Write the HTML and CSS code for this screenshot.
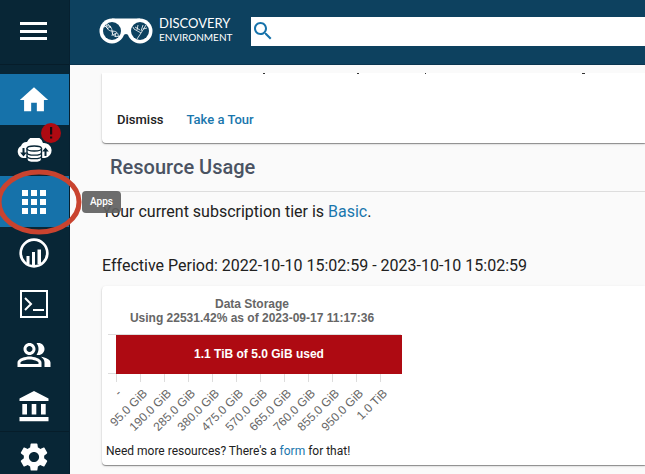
FILE: index.html
```html
<!DOCTYPE html>
<html lang="en">
<head>
<meta charset="utf-8">
<meta name="viewport" content="width=device-width, initial-scale=1">
<title>Discovery Environment</title>
<link rel="stylesheet" href="styles.css">
</head>
<body>
<div class="app">
  <nav class="sidebar" aria-label="Main">
    <button class="menu" type="button" aria-label="Menu">
      <svg width="28" height="20" viewBox="0 0 28 20"><path d="M0 1h27v3H0zM0 9h27v3H0zM0 16h27v3H0z"/></svg>
    </button>
    <a class="item active" href="#" aria-label="Home">
      <svg width="34" height="34" viewBox="0 0 24 24"><path d="M10 20v-6h4v6h5v-8h3L12 3 2 12h3v8z"/></svg>
    </a>
    <a class="item" href="#" aria-label="Data">
      <svg width="36" height="26" viewBox="0 0 36 26">
        <path d="M7 20A6.500 6.500 0 0 1 5 8 6 6 0 0 1 11 4 8.500 8.500 0 0 1 27 5 7.500 7.500 0 0 1 29 20z"/>
        <path class="ink" d="M6.500 10h2v4.500h2.300l-3.300 4-3.300-4h2.300zM30.500 18h-2v-4.500h-2.300l3.300-4 3.300 4h-2.300z"/>
        <path class="disk" d="M11 10v11.500c0 4 14.500 4 14.500 0V10"/>
        <ellipse class="disk" cx="18.250" cy="10.500" rx="7.250" ry="2.500"/>
        <path class="diskline" d="M11 14.500c0 3.600 14.500 3.600 14.500 0M11 18c0 3.600 14.500 3.600 14.500 0"/>
      </svg>
      <span class="badge"><svg width="20" height="20" viewBox="0 0 20 20"><path d="M9 4h2.200v7.600H9zM9 13.500h2.200v2H9z"/></svg></span>
    </a>
    <a class="item active" href="#" aria-label="Apps">
      <svg width="24" height="24" viewBox="0 0 24 24"><path d="M0 0h6v6H0zM9 0h6v6H9zM18 0h6v6h-6zM0 9h6v6H0zM9 9h6v6H9zM18 9h6v6h-6zM0 18h6v6H0zM9 18h6v6H9zM18 18h6v6h-6z"/></svg>
      <svg class="ring" width="86" height="66" viewBox="0 0 86 66"><ellipse cx="41" cy="33" rx="40" ry="30"/></svg>
      <span class="tip">Apps</span>
    </a>
    <a class="item" href="#" aria-label="Analyses">
      <svg width="30" height="30" viewBox="0 0 30 30"><circle class="stroke" cx="15" cy="15" r="13.300"/><path d="M7.500 18h3v8h-3zM13 14h3v13.500h-3zM18.500 11.500h3.500V26h-3.500z"/></svg>
    </a>
    <a class="item" href="#" aria-label="Terminal">
      <svg width="28" height="28" viewBox="0 0 28 28"><path class="stroke2" d="M1 1h26v26H1zM5 8l6 6-6 6M13 20h11"/></svg>
    </a>
    <a class="item" href="#" aria-label="Teams">
      <svg width="36" height="36" viewBox="0 0 24 24"><path d="M16.670 13.130C18.040 14.060 19 15.320 19 17v3h4v-3c0-2.180-3.570-3.470-6.330-3.870M15 12c2.210 0 4-1.790 4-4s-1.790-4-4-4c-.470 0-.910.100-1.330.240C14.500 5.270 15 6.580 15 8s-.500 2.730-1.330 3.760c.420.140.860.240 1.330.240M9 12c2.210 0 4-1.790 4-4s-1.790-4-4-4-4 1.790-4 4 1.790 4 4 4m0-6c1.100 0 2 .900 2 2s-.900 2-2 2-2-.900-2-2 .900-2 2-2m0 7c-2.670 0-8 1.340-8 4v3h16v-3c0-2.660-5.330-4-8-4m6 5H3v-.990C3.200 16.290 6.300 15 9 15s5.800 1.290 6 2z"/></svg>
    </a>
    <a class="item" href="#" aria-label="Collections">
      <svg width="30" height="32" viewBox="0 0 30 32"><path d="M15 1l14.500 7.500V11H.500V8.500zM3.300 14H8v10.500H3.300zM12.700 14h4.600v10.500h-4.600zM22 14h4.700v10.500H22zM.500 27h29v4.200H.500z"/></svg>
    </a>
    <a class="item last" href="#" aria-label="Settings">
      <svg width="34" height="34" viewBox="0 0 24 24"><path d="M19.140 12.940c.040-.300.060-.610.060-.940 0-.320-.020-.640-.070-.940l2.030-1.580c.180-.140.230-.410.120-.610l-1.920-3.320c-.120-.220-.370-.290-.590-.220l-2.390.960c-.500-.380-1.030-.700-1.620-.940l-.360-2.540c-.040-.240-.240-.410-.480-.410h-3.840c-.240 0-.430.170-.470.410l-.360 2.540c-.590.240-1.130.570-1.620.940l-2.390-.960c-.220-.080-.470 0-.590.220L2.740 8.870c-.120.210-.080.470.120.610l2.030 1.580c-.050.300-.090.630-.090.940s.020.640.070.940l-2.030 1.580c-.180.140-.230.410-.120.610l1.920 3.320c.120.220.370.290.590.220l2.390-.960c.500.380 1.030.700 1.620.940l.360 2.540c.050.240.240.410.480.410h3.840c.240 0 .440-.170.470-.410l.360-2.540c.590-.240 1.130-.560 1.620-.940l2.390.960c.220.080.470 0 .590-.220l1.920-3.320c.120-.220.070-.470-.120-.610zM12 15.600c-1.980 0-3.600-1.620-3.600-3.600s1.620-3.600 3.600-3.600 3.600 1.620 3.600 3.600-1.620 3.600-3.600 3.600"/></svg>
    </a>
  </nav>

  <div class="content">
    <header class="topbar">
      <a class="brand" href="#">
        <svg width="54" height="26" viewBox="0 0 54 26">
          <circle class="white" cx="13" cy="13" r="12.500"/><circle class="white" cx="41" cy="13" r="12.500"/>
          <path class="white" d="M13 .500H41L33 22Q27 10 21 22z"/>
          <circle class="lens" cx="13" cy="13" r="9"/><circle class="lens" cx="41" cy="13" r="9"/>
          <path class="draw" d="M5 9c5-3 8 0 8 4s3 7 7 5M8 5c-1 5 1 8 5 8s7 2 6 6M6 8l3 3M9 6l3 4M14 13l-1 5M16 15l1 4M8 11l4-3M14 17l4-2"/>
          <path class="draw" d="M38 21l4-6 5-8M42 15l-7-4M38 12l1-5M35 11l-1-2M42 13l2-6M44 11l4-1M36 9l5 3"/>
        </svg>
        <span class="name"><span class="big">DISCOVERY</span><span class="small">ENVIRONMENT</span></span>
      </a>
      <label class="search">
        <svg width="24" height="24" viewBox="0 0 24 24"><path d="M15.500 14h-.790l-.280-.270C15.410 12.590 16 11.110 16 9.500 16 5.910 13.090 3 9.500 3S3 5.910 3 9.500 5.910 16 9.500 16c1.610 0 3.090-.590 4.230-1.570l.270.280v.790l5 4.990L20.490 19zm-6 0C7.010 14 5 11.990 5 9.500S7.010 5 9.500 5 14 7.010 14 9.500 11.990 14 9.500 14"/></svg>
        <input type="search" aria-label="Search">
      </label>
    </header>

    <main>
      <section class="card welcome">
        <svg class="edge" width="500" height="1" viewBox="0 0 500 1" aria-hidden="true"><path d="M161 0h2v1h-2zM255 0h2v1h-2zM323 0h1v1h-1zM480 0h3v1h-3z"/></svg>
        <div class="actions">
          <button type="button">Dismiss</button>
          <button class="primary" type="button">Take a Tour</button>
        </div>
      </section>

      <h2>Resource Usage</h2>
      <p class="tier">Your current subscription tier is <a href="#">Basic</a>.</p>
      <p class="period">Effective Period: 2022-10-10 15:02:59 - 2023-10-10 15:02:59</p>

      <section class="card usage">
        <svg class="chart" width="310" height="150" viewBox="0 0 310 150" role="img" aria-label="Data Storage">
          <g class="title"><text x="150" y="22">Data Storage</text><text x="150" y="36">Using 22531.42% as of 2023-09-17 11:17:36</text></g>
          <path class="grid" d="M6 48.500H299M6 87.500H299M14.500 87v9M38.500 87v9M62.500 87v9M86.500 87v9M110.500 87v9M134.500 87v9M158.500 87v9M182.500 87v9M206.500 87v9M230.500 87v9M254.500 87v9M278.500 87v9"/>
          <rect class="bar" x="14" y="49" width="286" height="39"/>
          <text class="value" x="157" y="72">1.1 TiB of 5.0 GiB used</text>
          <g class="ticks">
            <text transform="translate(20 108) rotate(-45)">-</text>
            <text transform="translate(46 108) rotate(-45)">95.0 GiB</text>
            <text transform="translate(70 108) rotate(-45)">190.0 GiB</text>
            <text transform="translate(94 108) rotate(-45)">285.0 GiB</text>
            <text transform="translate(118 108) rotate(-45)">380.0 GiB</text>
            <text transform="translate(142 108) rotate(-45)">475.0 GiB</text>
            <text transform="translate(166 108) rotate(-45)">570.0 GiB</text>
            <text transform="translate(190 108) rotate(-45)">665.0 GiB</text>
            <text transform="translate(214 108) rotate(-45)">760.0 GiB</text>
            <text transform="translate(238 108) rotate(-45)">855.0 GiB</text>
            <text transform="translate(262 108) rotate(-45)">950.0 GiB</text>
            <text transform="translate(286 108) rotate(-45)">1.0 TiB</text>
          </g>
        </svg>
        <p class="more">Need more resources? There's a <a href="#">form</a> for that!</p>
      </section>
    </main>
  </div>
</div>
</body>
</html>
```
FILE: styles.css
```css
* { box-sizing: border-box; }
body { margin: 0; background: #fafafa; color: #212121; font-family: Roboto, sans-serif; font-size: 16px; }
a { color: #1976ad; text-decoration: none; }
button { border: 0; padding: 0; background: none; font: inherit; color: inherit; cursor: pointer; }
h2, p { margin: 0; }
svg { display: block; }

.app { display: flex; height: 100vh; overflow: hidden; }

.sidebar {
  position: relative; z-index: 1; flex: none; width: 70px;
  display: flex; flex-direction: column;
  background: #082636; border-right: 1px solid #062030;
}
.sidebar svg { fill: #fff; }
.menu { display: flex; flex: none; align-items: center; justify-content: center; height: 65px; margin-bottom: 9px; padding: 0 2px 2px 0; border-bottom: 1px solid #061d2a; }
.item { position: relative; display: flex; flex: none; align-items: center; justify-content: center; height: 51px; padding-right: 2px; }
.item.active { background: #1672aa; }
.item.last { border-top: 1px solid #061d2a; }
.sidebar .ink { fill: #082636; }
.sidebar .disk { fill: #fff; stroke: #082636; stroke-width: 1.3; }
.sidebar .diskline { fill: none; stroke: #082636; stroke-width: 1.3; }
.sidebar .stroke { fill: none; stroke: #fff; stroke-width: 2.7; }
.sidebar .stroke2 { fill: none; stroke: #fff; stroke-width: 2; }
.badge { position: absolute; top: -2px; left: 41px; border-radius: 50%; background: #ae0a12; }
.sidebar .badge svg { fill: #170c12; }
.sidebar .ring { position: absolute; top: -7px; left: -2px; fill: none; stroke: #c9432f; stroke-width: 5; }
.tip {
  position: absolute; left: 82px; top: 15px; padding: 0 8px;
  border-radius: 4px; background: rgba(97, 97, 97, .92);
  color: #fff; font-size: 10px; font-weight: 500; line-height: 22px;
}

.content { flex: 1; min-width: 0; display: flex; flex-direction: column; }
.topbar {
  display: flex; flex: none; align-items: center; gap: 19px;
  height: 65px; padding: 0 0 2px 29px;
  background: #0d415f; border-bottom: 1px solid #0a3550;
}
.brand { display: flex; align-items: center; gap: 6px; color: #fff; font-family: Lato, sans-serif; }
.white { fill: #fff; }
.lens { fill: #0d415f; }
.draw { fill: none; stroke: #fff; stroke-width: .8; }
.name { display: flex; flex-direction: column; padding-bottom: 2px; }
.big { font-size: 13px; line-height: 14px; }
.small { font-size: 10px; line-height: 14px; }
.search { flex: 1; display: flex; align-items: center; height: 29px; background: #fff; }
.search svg { fill: #1672aa; flex: none; }
.search input { flex: 1; min-width: 0; border: 0; outline: 0; background: none; font: inherit; }

main { flex: 1; min-height: 0; overflow: hidden; padding: 8px 0 8px 32px; }
.card { background: #fff; border-radius: 4px 0 0 4px; box-shadow: 0 1px 1px rgba(0, 0, 0, .4), 0 1px 3px rgba(0, 0, 0, .12); }
.welcome { border-top-left-radius: 0; padding-bottom: 12px; clip-path: inset(0 0 -4px -4px); }
.edge { fill: #333; }
.actions { display: flex; gap: 23px; padding: 34px 15px 0; font-size: 13px; font-weight: 500; line-height: 23px; }
.primary { color: #1976ad; }
h2 { padding: 0 8px; border-bottom: 1px solid #ddd; color: #4a5362; font-size: 20px; font-weight: 500; line-height: 48px; }
.tier { padding-top: 8px; line-height: 24px; }
.period { padding: 30px 0 8px; line-height: 24px; }
.usage { padding-bottom: 4px; }
.chart { font-family: "Liberation Sans", sans-serif; font-size: 12px; }
.title { fill: #666; font-weight: bold; text-anchor: middle; }
.grid { fill: none; stroke: #ddd; }
.bar { fill: #ae0a12; }
.value { fill: #fff; font-weight: bold; text-anchor: middle; }
.ticks { fill: #666; text-anchor: end; }
.more { padding: 5px 4px 0; font-size: 12px; line-height: 20px; }
```
